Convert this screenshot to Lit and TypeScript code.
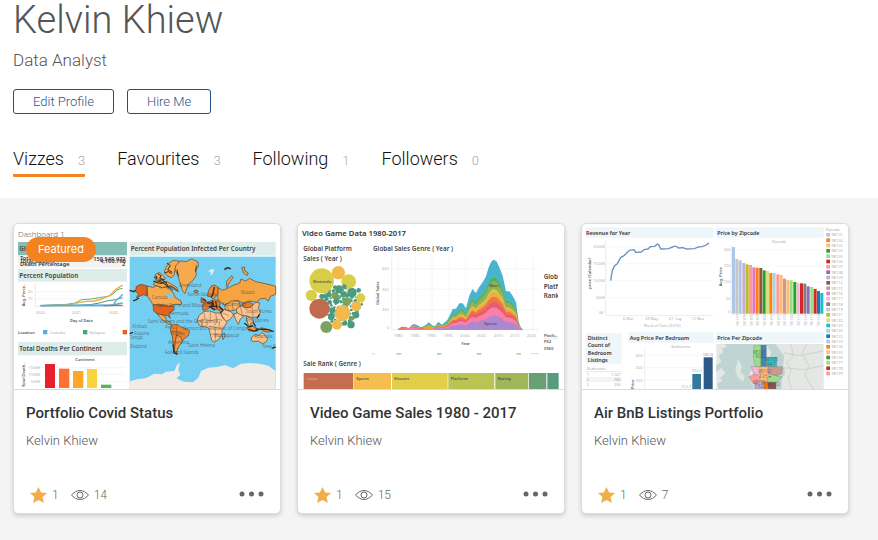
import { LitElement, html, svg, css } from "lit";
import { customElement, property } from "lit/decorators.js";

type Box = [number, number, number, number, string];
type Dot = [number, number, number, string];

/** A chart label; the style class picks size and weight. */
const label = (x: number, y: number, text: string, cls = "tick") =>
  svg`<text x=${x} y=${y} class=${cls}>${text}</text>`;
const upright = (x: number, y: number, text: string, cls = "axis") =>
  svg`<text transform="translate(${x} ${y}) rotate(-90)" class=${cls}>${text}</text>`;
const box = ([x, y, w, h, fill]: Box) =>
  svg`<rect x=${x} y=${y} width=${w} height=${h} fill=${fill} />`;
const dot = ([x, y, r, fill]: Dot) =>
  svg`<circle cx=${x} cy=${y} r=${r} fill=${fill} />`;
const line = (points: string, stroke: string, width = 4) =>
  svg`<polyline points=${points} fill="none" stroke=${stroke} stroke-width=${width} stroke-linejoin="round" />`;

const chartText = css`
  .chart {
    display: block;
    width: 100%;
    height: 100%;
  }
  text {
    font-family: "Noto Sans", "Open Sans", sans-serif;
    fill: #777;
    font-size: 12px;
  }
  .title {
    font-size: 19px;
    font-weight: 600;
    fill: #444;
  }
  .small-title {
    font-size: 16px;
    font-weight: 600;
    fill: #333;
  }
  .large-title {
    font-size: 23px;
    font-weight: 600;
    fill: #333;
  }
  .plain-title {
    font-size: 24px;
    fill: #666;
  }
  .axis {
    font-size: 12px;
    font-weight: 600;
    fill: #555;
  }
  .tick {
    fill: #888;
  }
  .light {
    fill: #f0d5cc;
  }
  .map {
    font-size: 14px;
    fill: #333;
    opacity: 0.8;
  }
  .total {
    font-size: 17px;
    font-weight: 600;
    fill: #333;
  }
`;

@customElement("covid-viz")
export class CovidViz extends LitElement {
  static styles = chartText;

  private land: [string, string][] = [
    ["M66 201 L84 205 96 200 108 207 122 204 138 214 146 224 150 235 168 246 170 256 148 256 130 262 112 258 84 257 76 244 68 232Z", "#f6a94d"],
    ["M34 202 48 196 65 200 66 231 56 227 44 232 34 236 40 226 32 216Z", "#e2621f"],
    ["M88 188 100 183 112 190 124 187 140 196 156 206 160 218 150 212 140 205 126 202 112 206 96 200 86 198Z", "#f6a94d"],
    ["M92 166 104 160 112 168 122 178 114 184 100 180 88 176Z", "#f6a94d"],
    ["M122 146 132 132 146 124 164 127 158 140 150 152 148 166 140 176 128 172 118 160Z", "#f6a94d"],
    ["M152 140 166 126 184 128 200 120 218 128 220 142 212 154 214 168 204 184 190 196 180 224 172 214 164 188 158 168 150 152Z", "#f6a94d"],
    ["M84 257 112 258 130 262 146 262 148 272 140 278 132 286 136 298 128 290 112 288 96 284 86 276Z", "#e2621f"],
    ["M96 284 112 288 122 294 124 306 134 308 140 318 132 316 116 306 106 296Z", "#f6a94d"],
    ["M140 318 156 316 168 324 180 328 194 336 190 350 176 360 168 372 160 382 154 394 156 406 146 400 144 372 142 352 136 336Z", "#ee8432"],
    ["M154 348 168 354 172 368 160 384 154 400 148 398 150 372Z", "#f29a48"],
    ["M206 216 216 213 220 219 210 222Z", "#e97a2b"],
    ["M250 216 258 202 268 198 278 204 280 216 274 232 264 240 256 232 248 232Z", "#f08a35"],
    ["M228 236 238 240 244 248 236 252 228 250Z", "#e2621f"],
    ["M232 258 244 250 256 246 268 242 280 244 286 254 282 264 292 268 286 276 274 270 266 274 256 264 246 272 234 274Z", "#e97a2b"],
    ["M280 206 292 214 308 208 322 200 344 192 348 180 362 186 374 178 392 188 412 192 438 198 452 202 452 226 436 232 430 246 420 238 404 240 396 250 374 246 352 252 338 244 320 248 300 258 286 250 278 238Z", "#f6a441"],
    ["M350 256 372 248 384 256 376 266 360 266Z", "#e97a2b"],
    ["M300 258 320 246 340 246 346 260 334 272 316 276 300 272Z", "#f4b264"],
    ["M334 270 348 260 362 267 378 265 392 250 404 252 400 268 406 280 398 294 380 296 364 290 348 290 336 282Z", "#fac08a"],
    ["M284 272 300 272 318 278 326 288 314 302 302 308 292 292Z", "#fbc795"],
    ["M326 284 338 282 356 292 346 300 340 316 332 302Z", "#fbc795"],
    ["M364 292 380 298 386 308 376 314 380 326 370 318 366 306Z", "#fac08a"],
    ["M222 290 236 278 254 276 272 282 286 282 294 298 306 310 300 320 292 332 290 348 280 362 268 370 260 364 256 346 252 328 240 322 226 322 216 306Z", "#fbc795"],
    ["M292 350 298 342 300 350 294 362Z", "#fbc795"],
    ["M366 326 380 320 396 328 390 336 372 336Z", "#ee9145"],
    ["M408 326 424 330 440 336 430 340 414 336Z", "#ee9145"],
    ["M380 354 392 346 402 350 410 340 420 348 428 360 422 370 412 374 400 366 386 368 378 364Z", "#fbbe82"],
    ["M304 188 320 170 324 176 312 192 306 206Z", "#f6a441"],
    ["M350 146 358 144 360 156 370 162 366 170 356 162Z", "#f6a441"],
  ];

  render() {
    const names: [number, number, string][] = [
      [162, 203, "Greenland"], [80, 239, "Canada"], [348, 224, "Russia"], [188, 231, "Faroe Islands"],
      [96, 264, "Saint Pierre and Miquelon"], [132, 288, "Bermuda"], [290, 262, "Kazakhstan"], [362, 281, "South Korea"],
      [362, 308, "Philippines"], [68, 313, "Saint Vincent and the Grenadines"], [120, 331, "Peru"], [174, 332, "Democratic Republic of Congo"],
      [22, 327, "Kiribati"], [28, 347, "Futuna"], [14, 361, "Tonga"], [14, 388, "Zealand"], [130, 375, "Argentina"],
      [266, 355, "Madagascar"], [190, 385, "Saint Helena"], [120, 405, "Falkland Islands"], [138, 349, "Bolivia"], [388, 357, "Australia"],
      [412, 388, "New Z."],
    ];
    return html`<svg class="chart" viewBox="0 0 798 495" role="img" aria-label="Covid dashboard">
      <g transform="translate(-12 -15)">
        ${label(24, 53, "Dashboard 1", "plain-title")}
        ${[[24, 69, 327, 40, "#86bdb7"], [24, 150, 327, 38, "#deedea"], [24, 369, 327, 40, "#deedea"], [24, 110, 327, 36, "#f4f4f4"]].map((b) => box(b as Box))}
        ${label(28, 97, "Global Numbers", "title")}
        ${label(30, 124, "Total Cases", "total")}${label(30, 132, "Total Deaths", "total")}${label(30, 140, "Death Percentage", "total")}
        ${label(250, 125, "150,549,972", "total")}${label(270, 132, "4,160,790", "total")}${label(336, 140, "2", "total")}
        ${label(28, 177, "Percent Population", "title")}
        ${line("76,218 346,218", "#eee", 2)}${line("76,240 346,240", "#eee", 2)}${line("76,195 76,262 346,262", "#ddd", 2)}
        ${line("92,260 170,258 200,259 240,257 268,252 290,246 316,242 338,236", "#4a9b75", 3)}
        ${line("92,260 170,256 196,252 214,242 244,240 268,236 294,232 308,226 322,212 338,208", "#5fae7d", 3)}
        ${line("92,260 184,257 208,250 230,247 252,246 276,240 300,229 316,212 338,198", "#f5a93f", 4)}
        ${line("92,260 310,258 318,244 328,236 338,226", "#55b0de", 4)}
        ${line("92,260 300,259 338,252", "#55b0de", 5)}${line("280,260 338,259", "#e2621f", 4)}
        ${label(54, 222, "20")}${label(54, 243, "10")}${label(78, 284, "2020")}${label(186, 284, "2021")}${label(297, 284, "2022")}
        ${label(180, 310, "Day of Date", "axis")}${upright(46, 262, "Avg. Perce..")}
        ${label(24, 344, "Location", "axis")}${label(118, 344, "Australia")}${label(238, 344, "Malaysia")}
        ${[[99, 333, 13, 13, "#55b0de"], [219, 333, 13, 13, "#4da477"], [338, 333, 13, 13, "#e2621f"]].map((b) => box(b as Box))}
        ${label(28, 395, "Total Deaths Per Continent", "title")}
        ${label(196, 426, "Continent", "axis")}
        ${line("76,446 346,446", "#eee", 2)}${line("76,466 346,466", "#eee", 2)}${line("76,487 346,487", "#eee", 2)}
        ${label(55, 450, "1500K")}${label(55, 470, "1000K")}${label(62, 491, "500K")}${upright(46, 504, "Total Death..")}
        ${[[105, 435, 30, 72, "#ea1f2d"], [147, 449, 31, 58, "#ff7033"], [189, 456, 31, 51, "#fca62a"], [231, 450, 30, 57, "#fad43f"], [273, 497, 31, 10, "#53b45c"]].map((b) => box(b as Box))}
      </g>
      <g transform="translate(333 -15)">
        ${box([14, 69, 438, 41, "#deedea"])}
        ${label(17, 97, "Percent Population Infected Per Country", "title")}
        ${box([14, 113, 438, 397, "#73cef1"])}
        <path d="M14 487 40 480 62 478 88 464 112 466 122 458 148 456 156 438 165 430 160 452 166 468 154 478 176 488 204 490 220 476 228 456 250 446 276 444 300 438 324 448 348 434 376 432 404 434 430 440 452 456V510H14Z" fill="#f0ebe6" />
        ${this.land.map(([d, fill]) => svg`<path d=${d} fill=${fill} stroke="#5a4328" stroke-width="2" stroke-linejoin="round" />`)}
        <g fill="none" stroke="#3b2b1c" stroke-width="1">
          <path d="M88 176 96 172 92 184M98 164 108 170 104 178 118 182M92 190 108 194 118 188 130 200M126 132 136 140 128 152 142 160M134 200 146 206 158 216M120 196 132 208M84 186 96 190 110 182 126 192M118 162 130 158 140 164M100 186 122 196 144 214M214 140 212 158M156 152 160 172" stroke-width="3" />
          <path d="M218 306 240 300 256 306 274 300 292 304M236 280 240 300M256 278 256 306M272 284 276 306 268 320M252 322 270 324 292 330M270 324 272 346 288 346M256 346 272 346 270 368M232 300 232 322M156 318 154 336 174 344M140 336 154 338M154 338 156 358M306 260 312 274M322 250 324 274M346 260 352 290M294 282 312 290M382 264 384 294M228 306 230 320M246 304 246 322M284 306 282 322" />
          <path d="M234 240 244 246M246 252 264 252 258 262 278 262M252 262 270 272M262 244 266 262M272 246 276 268M268 204 264 224 258 236M282 262 294 274 286 282M14 214 26 218 32 214M42 236 34 242 24 246M144 376 148 402 158 406M298 152 308 146 318 150M300 148 314 146M358 312 372 324 384 320M370 330 386 336 400 334M404 286 396 298M384 310 392 322M440 388 452 384M14 344 24 340M392 330 430 332 446 338" stroke-width="4" />
        </g>
        <path d="M254 152 268 150 266 158 262 166 256 168 258 158 250 158Z" fill="#e6eef2" />
        <path d="M124 226 136 220 146 232 140 240 130 236Z" fill="#73cef1" />
        ${names.map(([x, y, s]) => label(x, y, s, "map"))}
      </g>
    </svg>`;
  }
}

@customElement("games-viz")
export class GamesViz extends LitElement {
  static styles = chartText;

  private totals: [number, number][] = [
    [-95, 329], [-85, 323], [-72, 324], [-64, 328], [-50, 315], [-40, 317], [-28, 325], [-16, 320], [-3, 310], [8, 320], [16, 320], [25, 308],
    [36, 317], [52, 303], [60, 288], [68, 270], [78, 269], [88, 253], [98, 253], [108, 268], [118, 230], [127, 210], [138, 222],
    [146, 206], [160, 187], [168, 172], [175, 148], [183, 129], [190, 122], [200, 127], [210, 150], [218, 170], [228, 217],
    [238, 217], [248, 230], [258, 250], [266, 308], [272, 324], [278, 332],
  ];
  private layers: [number, string][] = [
    [1, "#49b4d1"], [0.78, "#4dc1a4"], [0.75, "#55aa6c"], [0.7, "#8fb254"], [0.58, "#d8c64a"],
    [0.53, "#f3a848"], [0.47, "#ef7448"], [0.39, "#e75b70"], [0.32, "#fb7fa9"], [0.2, "#ad87cf"],
  ];
  private bubbles: Dot[] = [
    [80, 185, 37, "#d8ce47"], [130, 161, 20, "#f2b94f"], [161, 188, 22, "#d8ce47"], [49, 229, 17, "#d8ce47"],
    [73, 269, 30, "#c26a50"], [142, 282, 24, "#f2b94f"], [126, 317, 15, "#f2b94f"], [94, 324, 18, "#7ba35f"],
    [183, 262, 15, "#f2b94f"], [197, 237, 14, "#d8ce47"], [155, 248, 13, "#7ba35f"], [120, 229, 11, "#7ba35f"],
    [171, 221, 14, "#4c9a80"], [132, 211, 12, "#4c9a80"], [168, 317, 11, "#4c9a80"], [183, 288, 10, "#4c9a80"],
    [109, 293, 10, "#4c9a80"], [124, 247, 9, "#4c9a80"], [146, 226, 9, "#4c9a80"], [112, 274, 9, "#4c9a80"],
    [81, 232, 8, "#4c9a80"], [101, 227, 8, "#4c9a80"], [171, 298, 7, "#7ba35f"], [150, 313, 7, "#4c9a80"],
    [148, 203, 7, "#4c9a80"], [191, 214, 7, "#4c9a80"], [94, 240, 6, "#4c9a80"], [104, 250, 7, "#4c9a80"],
  ];

  render() {
    const fillers: Dot[] = Array.from({ length: 90 }, (_, i) => {
      const angle = i * 2.4;
      const reach = 6 * Math.sqrt(i + 1);
      return [Math.round(137 + reach * Math.cos(angle) * 1.1), Math.round(258 + reach * Math.sin(angle)), 3 + (i % 4), i % 3 ? "#4c9a80" : "#65ab92"];
    });
    const area = (share: number) =>
      this.totals.map(([x, y]) => `${x},${332 - (332 - y) * share}`).join(" ") + " -95,332";
    return html`<svg class="chart" viewBox="0 0 798 495" role="img" aria-label="Video game dashboard">
      <g transform="translate(-9 -15)">
        ${label(21, 52, "Video Game Data 1980-2017", "large-title")}
        ${label(25, 97, "Global Platform", "title")}${label(25, 125, "Sales ( Year )", "title")}
        ${label(234, 97, "Global Sales Genre ( Year )", "title")}
        ${fillers.map(dot)}${this.bubbles.map(dot)}
        ${label(54, 191, "Nintendo", "axis")}
        ${line("290,115 290,332 732,332", "#e4e4e4", 2)}
        ${[149, 211, 272].map((y) => line(`290,${y} 732,${y}`, "#f0f0f0", 2))}
        ${[310, 361, 411, 462, 512, 562, 613, 663, 714].map((x) => line(`${x},115 ${x},332`, "#f2f2f2", 2))}
        ${label(261, 153, "600")}${label(261, 215, "400")}${label(261, 276, "200")}${label(276, 329, "0")}
        ${upright(252, 258, "Global Sales")}
        ${[1980, 1985, 1990, 1995, 2000, 2005, 2010, 2015, 2020].map((year, i) => label(296 + i * 50, 354, String(year)))}
        ${label(499, 379, "Year", "axis")}
        ${[[305, 402, 14, 5, "#8edbe6"], [426, 402, 13, 5, "#91d9cf"], [545, 402, 14, 5, "#91d4b4"], [664, 402, 14, 5, "#b6d595"]].map((b) => box(b as Box))}
        ${line("232,406 235,403 238,406", "#999", 2)}${line("706,404 732,404", "#ddd", 3)}
        ${label(25, 442, "Sale Rank ( Genre )", "title")}
        ${[[26, 462, 149, 48, "#c66d51"], [177, 462, 111, 48, "#f5bf50"], [291, 462, 167, 48, "#e1cf4c"], [460, 462, 138, 48, "#bac453"], [601, 462, 99, 48, "#a1b659"], [702, 462, 52, 48, "#67a075"], [757, 462, 34, 48, "#569b80"]].map((b) => box(b as Box))}
        ${label(33, 483, "Action", "light")}${label(184, 483, "Sports", "axis")}${label(297, 483, "Shooter", "axis")}${label(467, 483, "Platform", "axis")}${label(608, 483, "Racing", "axis")}
      </g>
      <g transform="translate(396 -15)">
        ${this.layers.map(([share, fill]) => svg`<polygon points=${area(share)} fill=${fill} />`)}
        <path d="M-70 332 -54 319 -42 332Z" fill="#f37aa9" /><path d="M-24 332 -4 319 16 332Z" fill="#e9a13f" />
        ${label(178, 204, "Misc", "axis")}${label(163, 319, "Sports", "axis")}
        <svg x="340" y="150" width="44" height="100">
          ${label(1, 31, "Global", "title")}${label(1, 59, "Platform", "title")}${label(1, 87, "Ranking", "title")}
        </svg>
        ${label(342, 353, "Platfo..", "axis")}${line("340,358 384,358", "#ddd", 2)}
        ${label(342, 372, "PS2", "axis")}${label(342, 392, "X360", "axis")}
      </g>
    </svg>`;
  }
}

@customElement("airbnb-viz")
export class AirbnbViz extends LitElement {
  static styles = chartText;

  private bars: [number, string][] = [
    [84, "#aec7e8"], [120, "#c7c7c7"], [124, "#aec7e8"], [132, "#c5b0d5"], [136, "#bcbd22"], [138, "#ff9896"],
    [145, "#e377c2"], [146, "#ff7f0e"], [147, "#8c564b"], [154, "#2ca02c"], [156, "#dbdb8d"], [162, "#ff7f0e"],
    [162, "#9edae5"], [166, "#ff9896"], [168, "#ffbb78"], [179, "#c49c94"], [183, "#ffbb78"], [184, "#98df8a"],
    [189, "#2ca02c"], [193, "#f7b6d2"], [193, "#d62728"], [194, "#7f7f7f"], [202, "#9467bd"], [204, "#98df8a"],
    [210, "#d62728"], [216, "#1f77b4"], [222, "#17becf"],
  ];
  private zips: [string, string][] = [
    ["98101", "#aec7e8"], ["98102", "#ff7f0e"], ["98103", "#ffbb78"], ["98104", "#2ca02c"], ["98105", "#98df8a"],
    ["98106", "#d62728"], ["98107", "#ff9896"], ["98108", "#9467bd"], ["98109", "#c5b0d5"], ["98112", "#8c564b"],
    ["98115", "#c49c94"], ["98116", "#e377c2"], ["98117", "#f7b6d2"], ["98118", "#7f7f7f"], ["98119", "#c7c7c7"],
    ["98121", "#bcbd22"], ["98122", "#dbdb8d"], ["98125", "#17becf"], ["98126", "#9edae5"], ["98133", "#1f77b4"],
    ["98134", "#aec7e8"], ["98136", "#ff7f0e"], ["98144", "#ffbb78"], ["98146", "#2ca02c"], ["98177", "#98df8a"],
    ["98178", "#d62728"], ["98199", "#ff9896"],
  ];

  render() {
    const columns = ["98119", "98109", "98105", "98103", "98104", "98102", "98107", "98115", "98136", "98117", "98118", "98177", "98133"];
    return html`<svg class="chart" viewBox="0 0 798 495" role="img" aria-label="Listings dashboard">
      <g transform="translate(-12 -15)">
        ${[[22, 25, 385, 31, "#eef6fa"], [23, 343, 108, 92, "#eef6fa"], [152, 339, 255, 32, "#eef6fa"], [24, 474, 106, 15, "#f4f4f4"]].map((b) => box(b as Box))}
        ${label(24, 47, "Revenue for Year", "small-title")}
        ${line("83,62 83,290 405,290", "#e2e2e2", 2)}
        ${[83, 134, 185, 236].map((y) => line(`83,${y} 405,${y}`, "#f4f4f4", 2))}
        ${label(46, 88, "2000K")}${label(46, 138, "1500K")}${label(46, 189, "1000K")}${label(53, 240, "500K")}${label(62, 284, "0K")}
        ${upright(38, 209, "price (Calendar)")}
        ${label(135, 304, "6 Mar")}${label(201, 304, "29 May")}${label(272, 304, "21 Aug")}${label(340, 304, "13 Nov")}
        ${label(197, 324, "Week of Date [2016]")}
        ${line("98,185 103,154 110,140 118,134 128,116 138,110 148,100 155,94 168,92 173,100 190,99 198,92 210,90 217,83 230,82 238,75 243,78 248,90 272,89 288,82 295,82 301,87 315,86 325,90 350,89 360,84 372,83 385,78 393,71", "#6a8fc2", 4)}
        ${label(29, 362, "Distinct", "small-title")}${label(29, 384, "Count of", "small-title")}${label(29, 407, "Bedroom", "small-title")}${label(29, 429, "Listings", "small-title")}
        ${label(26, 454, "Bedrooms")}${line("24,458 130,458", "#ddd", 2)}
        ${label(26, 470, "1")}${label(26, 486, "2")}${label(26, 502, "3")}
        ${label(100, 470, "1,021")}${label(108, 486, "480")}${label(108, 502, "206")}
        ${label(155, 362, "Avg Price Per Bedroom", "small-title")}${label(280, 386, "Bedrooms")}
        ${line("200,390 200,510", "#e2e2e2", 2)}${[409, 446, 484].map((y) => line(`200,${y} 405,${y}`, "#f2f2f2", 2))}
        ${label(173, 413, "600")}${label(173, 450, "500")}${label(173, 488, "400")}${upright(169, 510, "Price")}
        ${[[343, 465, 26, 45, "#327a9c"], [377, 415, 27, 95, "#2c5985"]].map((b) => box(b as Box))}
        ${label(309, 508, "312.4")}${label(341, 459, "450.0")}${label(375, 410, "585.8")}
      </g>
      <g transform="translate(384 -15)">
        ${[[17, 25, 324, 31, "#eef6fa"], [17, 339, 324, 32, "#eef6fa"]].map((b) => box(b as Box))}
        ${label(22, 47, "Price by Zipcode", "small-title")}${label(186, 72, "Zipcode")}
        ${line("64,78 64,285 341,285", "#e2e2e2", 2)}${[92, 141, 190, 238].map((y) => line(`64,${y} 341,${y}`, "#f4f4f4", 2))}
        ${label(41, 96, "200")}${label(41, 145, "150")}${label(41, 193, "100")}${label(48, 242, "50")}${label(54, 282, "0")}
        ${upright(35, 202, "Avg. Price")}
        ${this.bars.map(([top, fill], i) => box([66 + Math.round(i * 10.2), top, 9, 284 - top, fill]))}
        ${columns.map((zip, i) => upright(87 + Math.round(i * 20.3), 320, zip, "tick"))}
        ${label(347, 35, "Zipcode")}
        ${this.zips.map(([zip, fill], i) => svg`${box([349, 42 + i * 16, 11, 11, fill])}${label(364, 52 + i * 16, zip)}`)}
        ${label(22, 362, "Price Per Zipcode", "small-title")}
        ${box([19, 375, 322, 135, "#e4e7e4"])}
        <path d="M44 375H132L130 406 140 440 120 460 116 478 136 510H26L22 494 38 486 30 478 46 462 34 446 18 460V440L34 428 26 410 40 400 36 388 52 384ZM168 375 184 400 178 420 204 450 220 440 222 410 196 375ZM190 440 222 446 226 462 216 480 214 510H198L192 480Z" fill="#bfd4d3" />
        <path d="M84 420 96 442 92 460 104 470 100 488 84 476 76 452Z" fill="#dfe5df" />
        <path d="M242 375 250 410 230 432 244 452 234 480 246 510M290 375 276 402 296 440 284 468 310 510M222 402 268 410 340 396M220 446 280 452 340 440" fill="none" stroke="#cfd3d0" stroke-width="3" />
        <g stroke="#746b65" stroke-width="1">
          <path d="M132 378H153V443H136L130 414Z" fill="#98df8a" />
          <path d="M153 378H169V443H153Z" fill="#4187bd" />
          <path d="M169 415H200V443H169Z" fill="#31bdcb" />
          <path d="M124 443H153V466H132Z" fill="#f7b6d2" />
          <path d="M150 443H176V488H150Z" fill="#ffbb78" />
          <path d="M174 443H218L216 464 198 470 174 464Z" fill="#c49c94" />
          <path d="M116 474 134 465 150 472 144 496 130 494Z" fill="#ff9896" />
          <path d="M172 478 188 468 216 474 200 490H174Z" fill="#98df8a" />
          <path d="M134 496 152 486 172 492V510H136Z" fill="#c5b0d5" />
          <path d="M172 490H198V510H172Z" fill="#8c564b" /><path d="M158 490H174V510H162Z" fill="#ff7f0e" />
        </g>
        ${label(128, 404, "98107", "map")}${label(136, 418, "90.2", "map")}${label(164, 427, "98105", "map")}${label(170, 440, "94.7", "map")}
        ${label(144, 463, "98102", "map")}${label(148, 477, "123.4", "map")}${label(128, 495, "98109", "map")}${label(170, 501, "98112", "map")}${label(134, 508, "132.2", "map")}
      </g>
    </svg>`;
  }
}

@customElement("viz-card")
export class VizCard extends LitElement {
  @property() heading = "";
  @property() author = "";
  @property({ type: Number }) likes = 0;
  @property({ type: Number }) views = 0;
  @property({ type: Boolean }) featured = false;

  static styles = css`
    :host {
      display: block;
      font-family: Roboto, "Liberation Sans", sans-serif;
    }
    .card {
      position: relative;
      border: 1px solid #dcdcdc;
      border-radius: 5px;
      background: #fff;
      box-shadow: 0 2px 4px rgba(0, 0, 0, 0.16);
      overflow: hidden;
    }
    .thumb {
      display: block;
      aspect-ratio: 266 / 165;
      border-bottom: 1px solid #dcdcdc;
      overflow: hidden;
    }
    .badge {
      position: absolute;
      top: 13px;
      left: 12px;
      padding: 0 12px;
      border-radius: 13px;
      background: #f58220;
      color: #fff;
      font: 400 11px/25px Inter, sans-serif;
    }
    .body {
      padding: 12px 12px 0;
    }
    h2 {
      margin: 0;
      font-size: 15px;
      line-height: 22px;
      font-weight: 500;
    }
    a {
      color: inherit;
      text-decoration: none;
    }
    h2 a {
      color: #333;
    }
    .author {
      display: block;
      margin-top: 7px;
      font-size: 13px;
      line-height: 20px;
      color: #555;
    }
    footer {
      display: flex;
      align-items: center;
      height: 36px;
      margin-top: 26px;
      padding: 0 16px 0 16px;
      font-size: 12px;
      line-height: 16px;
      color: #666;
    }
    button {
      display: flex;
      align-items: center;
      padding: 0;
      border: 0;
      background: none;
      font: inherit;
      color: inherit;
      cursor: pointer;
    }
    .like {
      gap: 5px;
    }
    .views {
      display: flex;
      align-items: center;
      gap: 5px;
      margin-left: 12px;
    }
    .more {
      margin-left: auto;
    }
  `;

  render() {
    return html`<article class="card">
      <a class="thumb" href="#" aria-label=${this.heading}><slot></slot></a>
      ${this.featured ? html`<span class="badge">Featured</span>` : null}
      <div class="body">
        <h2><a href="#">${this.heading}</a></h2>
        <a class="author" href="#">${this.author}</a>
      </div>
      <footer>
        <button class="like" aria-label="Favourite, ${this.likes}">
          <svg width="17" height="16" viewBox="0 0 17 16"><path d="M8.500 0 11.100 5.400 17 6 12.600 10 13.900 16 8.500 12.900 3.100 16 4.400 10 0 6 5.900 5.400Z" fill="#f0ad4e" /></svg>
          <span>${this.likes}</span>
        </button>
        <span class="views">
          <svg width="18" height="10" viewBox="0 0 18 10" fill="none" stroke="#666"><path d="M.6 5C5 -.9 13 -.9 17.400 5 13 10.900 5 10.900 .6 5Z" /><circle cx="9" cy="5" r="3" /></svg>
          <span>${this.views}</span>
        </span>
        <button class="more" aria-label="More options">
          <svg width="25" height="8" viewBox="0 0 25 8" fill="#666"><circle cx="3" cy="3" r="2.500" /><circle cx="12.500" cy="3" r="2.500" /><circle cx="22" cy="3" r="2.500" /></svg>
        </button>
      </footer>
    </article>`;
  }
}

@customElement("app-root")
export class AppRoot extends LitElement {
  static styles = css`
    :host {
      display: flex;
      flex-direction: column;
      min-height: 100vh;
      background: #fff;
      color: #555;
      font-family: Roboto, "Liberation Sans", sans-serif;
      font-weight: 300;
    }
    header {
      padding: 0 13px;
    }
    h1 {
      margin: 0;
      font-size: 38px;
      line-height: 40px;
      font-weight: 300;
    }
    .role {
      margin: 8px 0 0;
      font-size: 17px;
      line-height: 24px;
    }
    .actions {
      display: flex;
      gap: 13px;
      margin-top: 17px;
    }
    .actions button {
      padding: 0 19px;
      border: 1px solid #1f4e8c;
      border-radius: 3px;
      background: #fff;
      color: #2f5488;
      font: 300 13px/23px Roboto, "Liberation Sans", sans-serif;
      cursor: pointer;
    }
    nav {
      display: flex;
      gap: 32px;
      margin: 32px 0 21px;
    }
    .tab {
      display: flex;
      align-items: baseline;
      gap: 14px;
      border-bottom: 3px solid transparent;
      border-radius: 1px;
      color: #111;
      font-size: 18px;
      line-height: 26px;
      text-decoration: none;
    }
    .tab.active {
      border-color: #f58220;
    }
    .count {
      font-size: 13px;
      color: #aaa;
    }
    main {
      flex: 1;
      padding: 25px 29px 27px 13px;
      background: #f4f4f4;
    }
    .grid {
      display: grid;
      grid-template-columns: repeat(auto-fill, minmax(260px, 1fr));
      gap: 16px;
    }
  `;

  private tabs: [string, number][] = [["Vizzes", 3], ["Favourites", 3], ["Following", 1], ["Followers", 0]];

  render() {
    return html`
      <header>
        <h1>Kelvin Khiew</h1>
        <p class="role">Data Analyst</p>
        <div class="actions"><button>Edit Profile</button><button>Hire Me</button></div>
        <nav>
          ${this.tabs.map(([name, count], i) => html`<a href="#" class="tab ${i === 0 ? "active" : ""}"><span>${name}</span><span class="count">${count}</span></a>`)}
        </nav>
      </header>
      <main>
        <div class="grid">
          <viz-card heading="Portfolio Covid Status" author="Kelvin Khiew" likes="1" views="14" featured><covid-viz></covid-viz></viz-card>
          <viz-card heading="Video Game Sales 1980 - 2017" author="Kelvin Khiew" likes="1" views="15"><games-viz></games-viz></viz-card>
          <viz-card heading="Air BnB Listings Portfolio" author="Kelvin Khiew" likes="1" views="7"><airbnb-viz></airbnb-viz></viz-card>
        </div>
      </main>
    `;
  }
}
